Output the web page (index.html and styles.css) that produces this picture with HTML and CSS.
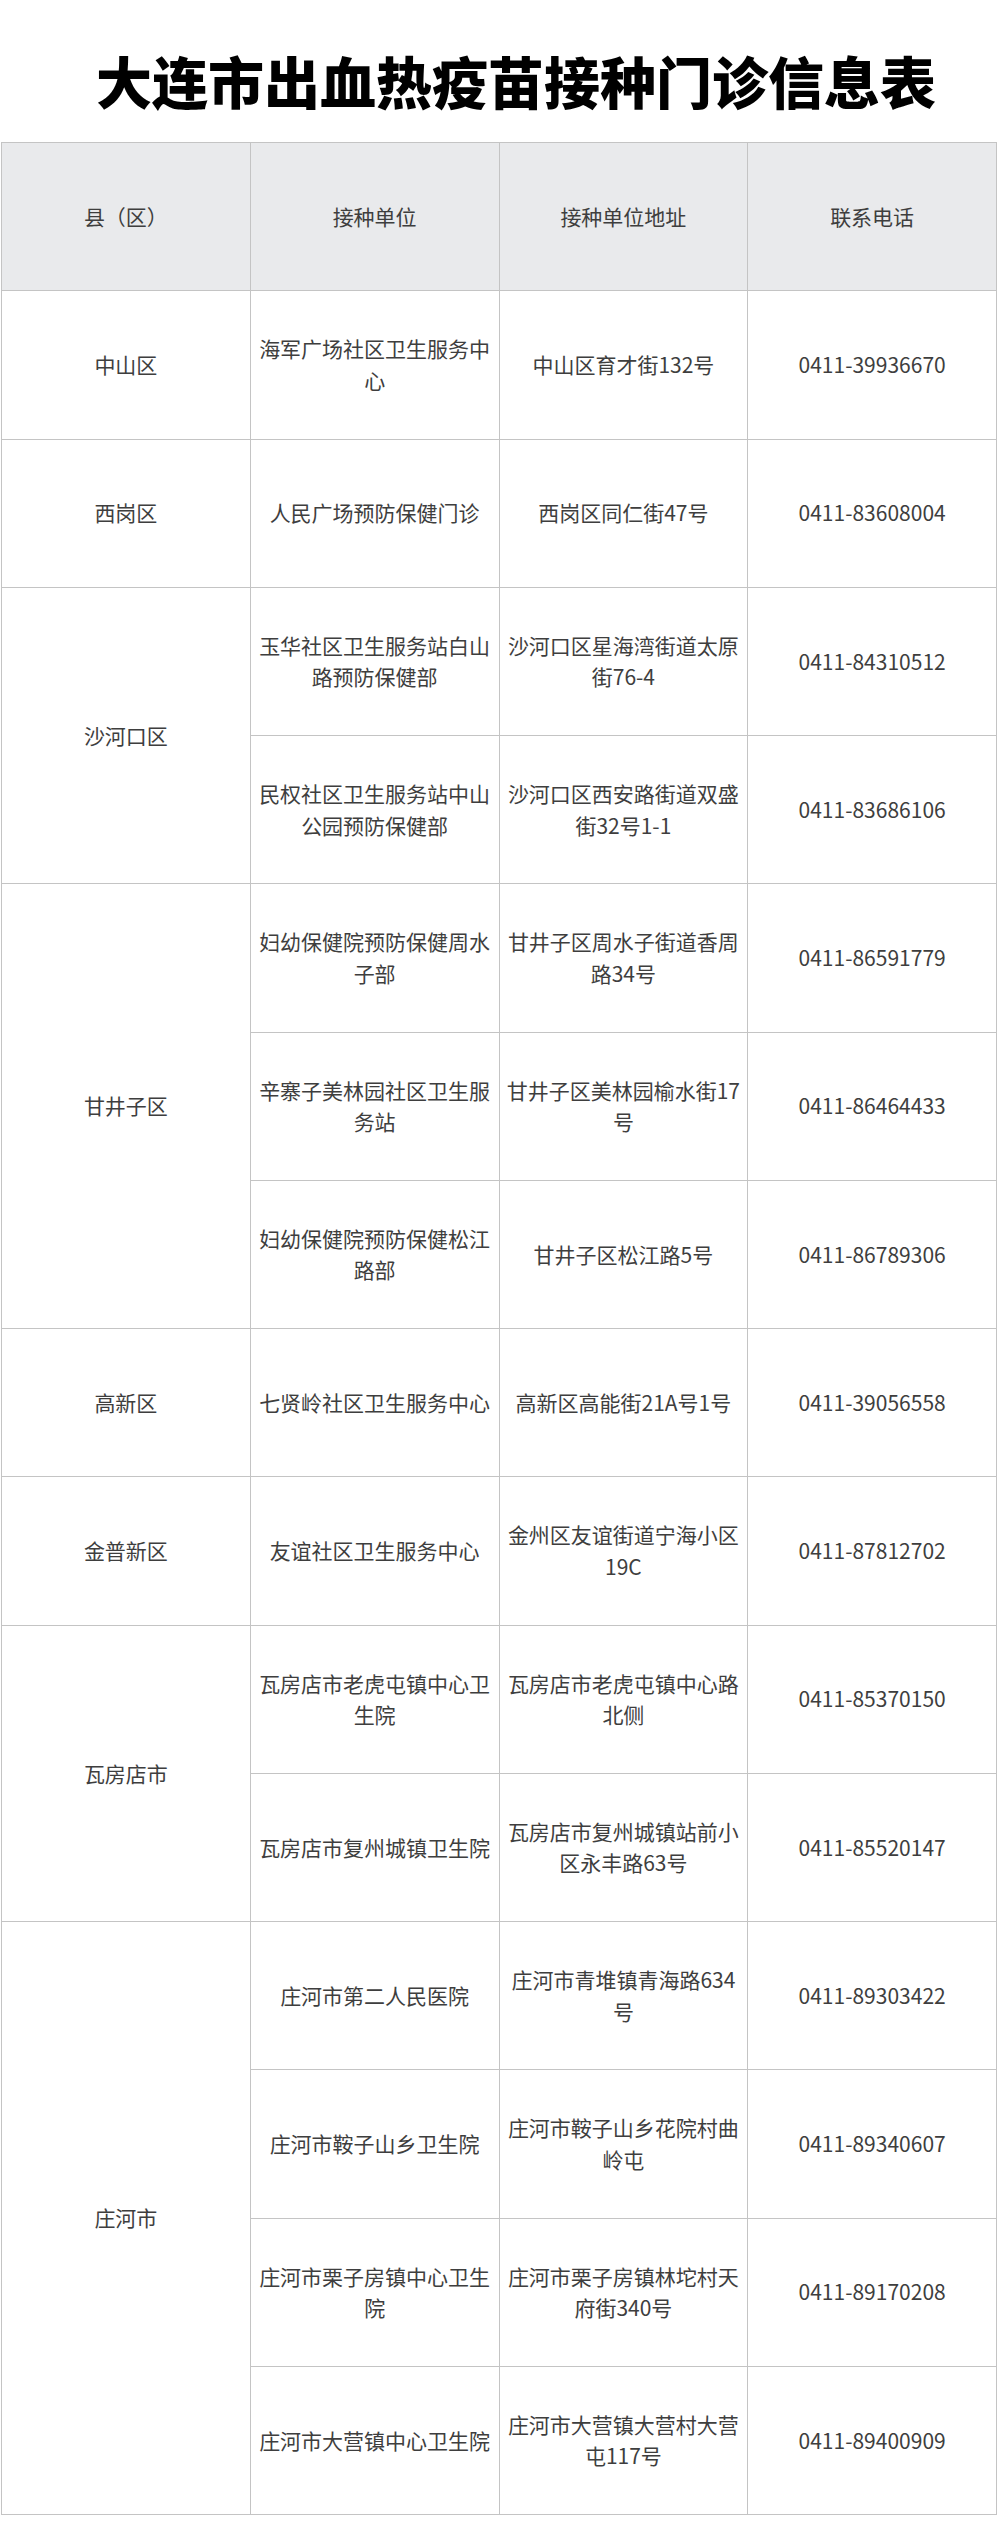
FILE: index.html
```html
<!DOCTYPE html>
<html lang="zh-CN">
<head>
<meta charset="utf-8">
<title>大连市出血热疫苗接种门诊信息表</title>
<link rel="stylesheet" href="styles.css">
</head>
<body>
<h1 class="title">大连市出血热疫苗接种门诊信息表</h1>
<table class="clinics">
  <colgroup><col><col><col><col></colgroup>
  <thead>
    <tr><th>县（区）</th><th>接种单位</th><th>接种单位地址</th><th>联系电话</th></tr>
  </thead>
  <tbody>
    <tr><td>中山区</td><td>海军广场社区卫生服务中心</td><td>中山区育才街132号</td><td>0411-39936670</td></tr>
    <tr><td>西岗区</td><td>人民广场预防保健门诊</td><td>西岗区同仁街47号</td><td>0411-83608004</td></tr>
    <tr><td rowspan="2">沙河口区</td><td>玉华社区卫生服务站白山路预防保健部</td><td>沙河口区星海湾街道太原街76-4</td><td>0411-84310512</td></tr>
    <tr><td>民权社区卫生服务站中山公园预防保健部</td><td>沙河口区西安路街道双盛街32号1-1</td><td>0411-83686106</td></tr>
    <tr><td rowspan="3">甘井子区</td><td>妇幼保健院预防保健周水子部</td><td>甘井子区周水子街道香周路34号</td><td>0411-86591779</td></tr>
    <tr><td>辛寨子美林园社区卫生服务站</td><td>甘井子区美林园榆水街17号</td><td>0411-86464433</td></tr>
    <tr><td>妇幼保健院预防保健松江路部</td><td>甘井子区松江路5号</td><td>0411-86789306</td></tr>
    <tr><td>高新区</td><td>七贤岭社区卫生服务中心</td><td>高新区高能街21A号1号</td><td>0411-39056558</td></tr>
    <tr><td>金普新区</td><td>友谊社区卫生服务中心</td><td>金州区友谊街道宁海小区19C</td><td>0411-87812702</td></tr>
    <tr><td rowspan="2">瓦房店市</td><td>瓦房店市老虎屯镇中心卫生院</td><td>瓦房店市老虎屯镇中心路北侧</td><td>0411-85370150</td></tr>
    <tr><td>瓦房店市复州城镇卫生院</td><td>瓦房店市复州城镇站前小区永丰路63号</td><td>0411-85520147</td></tr>
    <tr><td rowspan="4">庄河市</td><td>庄河市第二人民医院</td><td>庄河市青堆镇青海路634号</td><td>0411-89303422</td></tr>
    <tr><td>庄河市鞍子山乡卫生院</td><td>庄河市鞍子山乡花院村曲岭屯</td><td>0411-89340607</td></tr>
    <tr><td>庄河市栗子房镇中心卫生院</td><td>庄河市栗子房镇林坨村天府街340号</td><td>0411-89170208</td></tr>
    <tr><td>庄河市大营镇中心卫生院</td><td>庄河市大营镇大营村大营屯117号</td><td>0411-89400909</td></tr>
  </tbody>
</table>
</body>
</html>
```
FILE: styles.css
```css
html, body {
  margin: 0;
  padding: 0;
  background: #ffffff;
}
body {
  font-family: "Noto Sans CJK SC", "Noto Sans", sans-serif;
  color: #3e3e3e;
  height: 2539px;
}
.title {
  margin: 0;
  height: 142px;
  box-sizing: border-box;
  padding: 52px 0 0 32px;
  font-size: 56px;
  line-height: 56px;
  font-weight: 900;
  color: #000;
  text-align: center;
  letter-spacing: 0;
}
.clinics {
  margin-left: 1px;
  width: 996px;
  border-collapse: collapse;
  table-layout: fixed;
}
.clinics col {
  width: 25%;
}
.clinics th,
.clinics td {
  border: 1px solid #c4c4c4;
  height: 147.25px;
  padding: 0 6px;
  text-align: center;
  vertical-align: middle;
  font-size: 21px;
  line-height: 31.5px;
  font-weight: 400;
  color: #3e3e3e;
  word-break: break-all;
}
.clinics th {
  background: #e9eaec;
}
```
